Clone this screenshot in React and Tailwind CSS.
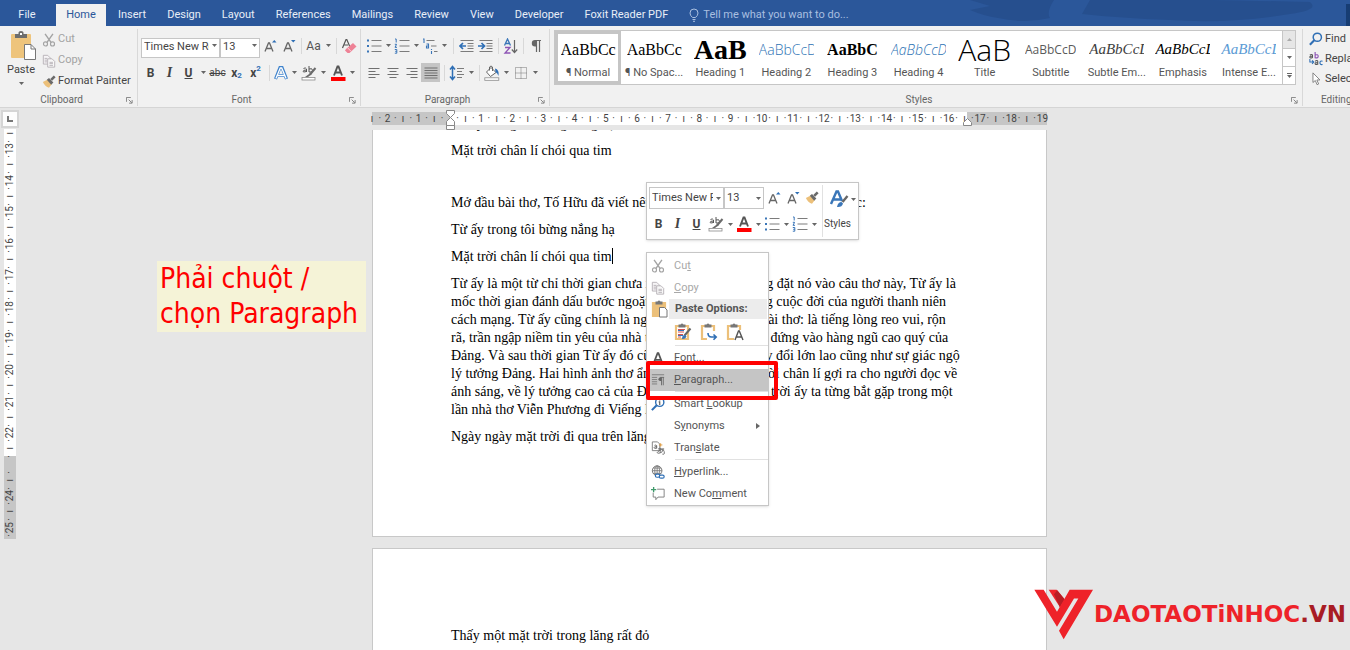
import React from "react";

const tabs = [
  "Insert",
  "Design",
  "Layout",
  "References",
  "Mailings",
  "Review",
  "View",
  "Developer",
  "Foxit Reader PDF",
];

const styleGallery = [
  { name: "¶ Normal", sample: "AaBbCc", look: "font-['Liberation_Serif',serif] text-base text-black", active: true },
  { name: "¶ No Spac...", sample: "AaBbCc", look: "font-['Liberation_Serif',serif] text-base text-black" },
  { name: "Heading 1", sample: "AaB", look: "font-['Liberation_Serif',serif] text-[28px] font-bold text-black" },
  { name: "Heading 2", sample: "AaBbCcD", look: "font-['Open_Sans',sans-serif] text-sm font-light text-[#2e74b5]" },
  { name: "Heading 3", sample: "AaBbC", look: "font-['Liberation_Serif',serif] text-base font-bold text-black" },
  { name: "Heading 4", sample: "AaBbCcD", look: "font-['Open_Sans',sans-serif] text-sm font-light italic text-[#2e74b5]" },
  { name: "Title", sample: "AaB", look: "font-['Open_Sans',sans-serif] text-[30px] font-light text-black" },
  { name: "Subtitle", sample: "AaBbCcD", look: "font-['Open_Sans',sans-serif] text-xs text-[#5a5a5a]" },
  { name: "Subtle Em...", sample: "AaBbCcD", look: "font-['Liberation_Serif',serif] text-[15px] italic text-[#404040]" },
  { name: "Emphasis", sample: "AaBbCcD", look: "font-['Liberation_Serif',serif] text-[15px] italic text-black" },
  { name: "Intense E...", sample: "AaBbCcD", look: "font-['Liberation_Serif',serif] text-[15px] italic text-[#5b9bd5]" },
];

const paragraphLines = [
  "Từ ấy là một từ chỉ thời gian chưa xác định cụ thể, nhưng đặt nó vào câu thơ này, Từ ấy là",
  "mốc thời gian đánh dấu bước ngoặt vô cùng lớn lao trong cuộc đời của người thanh niên",
  "cách mạng. Từ ấy cũng chính là nguồn cảm xúc của cả bài thơ: là tiếng lòng reo vui, rộn",
  "rã, trần ngập niềm tin yêu của nhà thơ trẻ khi mình được đứng vào hàng ngũ cao quý của",
  "Đảng. Và sau thời gian Từ ấy đó cũng chính là cả sự thay đổi lớn lao cũng như sự giác ngộ",
  "lý tưởng Đảng. Hai hình ảnh thơ ẩn dụ nắng hạ và mặt trời chân lí gợi ra cho người đọc về",
  "ánh sáng, về lý tưởng cao cả của Đảng cộng sản. Và mặt trời ấy ta từng bắt gặp trong một",
  "lần nhà thơ Viễn Phương đi Viếng lăng Bác:",
];

// Ruler marks come every quarter of a centimetre
const rulerMark = (quarter) => {
  if (quarter === 0) return "";
  if (quarter % 4 === 0) return String(Math.abs(quarter / 4));
  return quarter % 2 === 0 ? "ı" : "·";
};

const horizontalMarks = Array.from({ length: 87 }, (_, i) => rulerMark(i - 10));
const verticalMarks = Array.from({ length: 52 }, (_, i) =>
  i + 50 === 92 ? "" : rulerMark(i + 50),
);

/* ---------- Icons ---------- */

const Icon = ({ size = "w-4 h-4", box = "0 0 16 16", children }) => (
  <svg viewBox={box} className={`${size} shrink-0`} fill="none" aria-hidden="true">
    {children}
  </svg>
);

const Caret = () => (
  <svg viewBox="0 0 5 3" className="w-[5px] h-[3px] shrink-0" aria-hidden="true">
    <path d="M0 0h5L2.500 3z" fill="#666" />
  </svg>
);

const PasteIcon = () => (
  <Icon size="w-[26px] h-[29px]" box="0 0 26 29">
    <rect x="1" y="3" width="20" height="24" rx="1" fill="#eec47c" />
    <path d="M5 3h3.500V1.500a2.500 1.500 0 0 1 5 0V3H17v4H5z" fill="#6d6d6d" />
    <rect x="10" y="2" width="2" height="2" fill="#fff" />
    <path d="M14.500 13.500h6.500l4.500 4.500v10.500h-11z" fill="#fff" stroke="#777" />
    <path d="M21 13.500v4.500h4.500" stroke="#777" />
  </Icon>
);

const CutIcon = () => (
  <Icon size="w-[14px] h-[14px]">
    <path d="M3.500 1l7 10M12.500 1l-7 10" stroke="#a3a3a3" strokeWidth="1.600" />
    <circle cx="4" cy="12.500" r="2.300" stroke="#a3a3a3" strokeWidth="1.300" />
    <circle cx="12" cy="12.500" r="2.300" stroke="#a3a3a3" strokeWidth="1.300" />
  </Icon>
);

const CopyIcon = () => (
  <Icon size="w-[14px] h-[14px]">
    <path d="M1.500 1.500h5l3 3v7h-8z" fill="#f6f4f6" stroke="#b3aeb3" />
    <path d="M6.500 5.500h5l3 3v6.500h-8z" fill="#f8f8f8" stroke="#b3aeb3" />
    <path d="M3 5h3M3 7h3M3 9h3M8.500 9.500h4M8.500 11h4M8.500 13h4" stroke="#b3aeb3" />
  </Icon>
);

const BrushIcon = () => (
  <Icon size="w-[14px] h-[14px]">
    <path d="M1 8l5-2.500 5 5L8 14.500C5 14 2.500 11.500 1 8z" fill="#ecc07a" />
    <path d="M5.500 5.500L8 3.500l5 5-2.500 2.500z" fill="#6a6a6a" />
    <path d="M10.500 5.500l4-4" stroke="#6a6a6a" strokeWidth="3" />
  </Icon>
);

const GrowFontIcon = ({ down = false }) => (
  <Icon>
    <path d="M3 13.500L6.500 5h1l3.500 8.500M4.300 10.500h5.400" stroke="#666" strokeWidth="1.300" />
    <path d={down ? "M10 2h4.500l-2.200 2.500z" : "M10 4.500h4.500L12.300 2z"} fill="#2f6fb5" />
  </Icon>
);

const EraserIcon = () => (
  <Icon>
    <path d="M1.500 10L5 1.500h.8L9 9M3 7h4" stroke="#555" strokeWidth="1.200" />
    <path d="M5 11l7-6 3.500 3.500-7 6.500H6.500L4 12.500z" fill="#ee8296" />
    <path d="M6.500 9.700l3.500 3.600" stroke="#fbd5dc" />
  </Icon>
);

const TextEffectIcon = () => (
  <Icon>
    <path d="M2.500 14L7 2.500h2L13.500 14M4.500 10.500h7" stroke="#3f83cc" strokeWidth="3.200" />
    <path d="M2.900 13.600L7.300 3h1.400l4.400 10.600M4.500 10.500h7" stroke="#fff" strokeWidth="1.300" />
  </Icon>
);

const HighlightIcon = () => (
  <Icon>
    <path d="M2.500 3.500q2-1.500 3 .5v3M5.500 5q-3.500 0-3.500 1.300t3.500.2M8 1v6q3.500.8 3.500-1.700T8 4" stroke="#555" />
    <path d="M14.500 3L9 9.500" stroke="#6a6a6a" strokeWidth="2" />
    <path d="M9.500 8l1 1.500-3.500 2.500H4z" fill="#6a6a6a" />
    <rect x="1" y="12.500" width="13" height="2.500" fill="#fff" stroke="#8a8a8a" strokeWidth=".8" />
  </Icon>
);

const FontColorIcon = () => (
  <Icon>
    <path d="M4 10.500L7.500 1.500h1l3.500 9M5.200 7.500h5.600" stroke="#555" strokeWidth="1.900" />
    <rect x="1" y="12" width="14.500" height="4" fill="#ff0000" />
  </Icon>
);

const BulletsIcon = () => (
  <Icon>
    <path d="M1 2.500h2M1 8h2M1 13.500h2" stroke="#3a76b8" strokeWidth="2" />
    <path d="M5.500 2.500h10M5.500 8h10M5.500 13.500h10" stroke="#7c7c7c" strokeWidth="1.200" />
  </Icon>
);

const NumberingIcon = () => (
  <Icon>
    <path d="M1 1h1.200v3.500M.8 6.300h1.800L1 9.300h2M.8 11.500h2v3.700h-2M1.200 13.300h1.600" stroke="#3a76b8" />
    <path d="M5.500 2.500h10M5.500 8h10M5.500 13.500h10" stroke="#7c7c7c" strokeWidth="1.200" />
  </Icon>
);

const MultilevelIcon = () => (
  <Icon>
    <path d="M1 1h1v4M4.500 6h2v4h-2V8h2M9.500 11v1M9.500 13v3" stroke="#3a76b8" strokeWidth="1.100" />
    <path d="M4.500 2.500h8M9 8h5.500M12 13.500h3.500" stroke="#7c7c7c" strokeWidth="1.200" />
  </Icon>
);

const IndentIcon = ({ right = false }) => (
  <Icon>
    <path d="M1.500 2.500h13M8.500 5.500h6M8.500 8h6M8.500 10.500h6M1.500 13.500h13" stroke="#7c7c7c" strokeWidth="1.200" />
    <path
      d={right ? "M0 8h6M3.500 5l3 3-3 3" : "M1 8h6M4 5L1 8l3 3"}
      stroke="#2f6fb5"
      strokeWidth="1.700"
    />
  </Icon>
);

const SortIcon = () => (
  <Icon>
    <path d="M1.500 7.500L4.500 1l3 6.500M2.500 5.500h4" stroke="#3a76b8" strokeWidth="1.300" />
    <path d="M2 9.500h5l-5 5.500h5.500" stroke="#8e55b5" strokeWidth="1.300" />
    <path d="M11.500 2v12M8.800 11.500l2.700 3 2.700-3" stroke="#666" strokeWidth="1.200" />
  </Icon>
);

const PilcrowIcon = () => (
  <Icon>
    <path d="M13 2.500H7.500M8.500 2.500V14M11.500 2.500V14" stroke="#666" strokeWidth="1.200" />
    <path d="M8.500 2H7a3.200 3.200 0 0 0 0 6.400h1.500z" fill="#666" />
  </Icon>
);

const alignPaths = {
  left: "M2.500 3.500h11M2.500 6.500h7M2.500 9.500h11M2.500 12.500h7",
  center: "M2.500 3.500h11M4.500 6.500h7M2.500 9.500h11M4.500 12.500h7",
  right: "M2.500 3.500h11M6.500 6.500h7M2.500 9.500h11M6.500 12.500h7",
  justify: "M1.500 3h13M1.500 5.500h13M1.500 8h13M1.500 10.500h13M1.500 13h13",
};

const AlignIcon = ({ kind }) => (
  <Icon>
    <path d={alignPaths[kind]} stroke="#707070" strokeWidth="1.100" />
  </Icon>
);

const SpacingIcon = () => (
  <Icon>
    <path d="M3.500 2v12M1 4.500L3.500 1.500 6 4.500M1 11.500l2.500 3 2.500-3" stroke="#2f6fb5" strokeWidth="1.500" />
    <path d="M8 3.500h7M8 6.500h5M8 9.500h7M8 12.500h5" stroke="#7c7c7c" strokeWidth="1.200" />
  </Icon>
);

const ShadingIcon = () => (
  <Icon>
    <path d="M7 2.500l5 5-5.500 4-4-4.500z" fill="#fff" stroke="#666" />
    <path d="M5.500 5.500V2q1.500-2 3 0v4" stroke="#666" />
    <path d="M11 3.500q4.500 1 3.500 7.500-1-3-3-4z" fill="#2f6fb5" />
    <rect x=".8" y="12.800" width="14" height="2.500" fill="#fff" stroke="#8a8a8a" strokeWidth=".8" />
  </Icon>
);

const BordersIcon = () => (
  <Icon>
    <path d="M2.500 2.500h11v11h-11zM8 2.500v11M2.500 8h11" stroke="#777" strokeDasharray="1 1" />
  </Icon>
);

const LauncherIcon = () => (
  <svg viewBox="0 0 8 8" className="w-[7px] h-[7px]" fill="none" aria-hidden="true">
    <path d="M.5 5.500v-5h5M3 3l3.500 3.500M7 3.500V7H3.500" stroke="#777" />
  </svg>
);

const FindIcon = () => (
  <Icon size="w-[14px] h-[14px]">
    <circle cx="9.500" cy="6" r="4.700" stroke="#2f6fb5" strokeWidth="1.700" />
    <path d="M6 9.500L1 14.500" stroke="#2f6fb5" strokeWidth="2.400" />
  </Icon>
);

const ReplaceIcon = () => (
  <Icon size="w-[14px] h-[14px]">
    <path d="M1 3.500q2.500-1.500 3 0v3M4 4.500q-3.500 0-3 1.500t3 .3" stroke="#555" strokeWidth="1.200" />
    <path d="M7 0v6.500q3.500.8 3.500-1.700T7 3.500" stroke="#8e55b5" strokeWidth="1.300" />
    <path d="M1 8v3.500h4M3.500 9.500l2 2-2 2" stroke="#2f6fb5" strokeWidth="1.200" />
    <path d="M7 10.500q2.500-1.500 3 0v4M10 12q-3.500 0-3 1.500t3 .3" stroke="#555" strokeWidth="1.200" />
    <path d="M15.500 10.500q-3-.8-3 1.800t3 2" stroke="#2f6fb5" strokeWidth="1.300" />
  </Icon>
);

const SelectIcon = () => (
  <Icon size="w-[14px] h-[14px]">
    <path d="M4.500 1v11l2.700-2.300 2 4.800 1.800-.8-2-4.600h3.500z" fill="#fff" stroke="#777" />
  </Icon>
);

const PasteOptionIcon = ({ kind = "plain" }) => (
  <Icon size="w-[18px] h-[18px]" box="0 0 18 18">
    <path
      d="M2 3h12v13H2z"
      stroke="#ecc07a"
      strokeWidth="2.200"
      fill={kind === "copy" ? "#ecc07a" : "#fff"}
    />
    <path d="M4.500 1.500h2q1.500-2 3 0h2v3h-7z" fill="#777" />
    {kind === "copy" && <path d="M8.500 7.500h5l2.500 2.500v7H8.500z" fill="#fff" stroke="#777" />}
    {kind === "source" && (
      <>
        <path d="M4 6.500h7M4 9h6M4 11.500h5M4 14h3" stroke="#d9534f" />
        <path d="M4 7.500h6M4 12.500h5" stroke="#3a76b8" />
        <path d="M16.500 5.500l-6 7" stroke="#666" strokeWidth="2" />
        <path d="M8 16q0-4 3-4l1.500 1.500q-1 3-4.500 2.500z" fill="#3a76b8" />
      </>
    )}
    {kind === "merge" && (
      <>
        <path d="M7 8h10v9H7z" fill="#fff" />
        <path d="M8 10q0 4 3.500 4H16M13.500 11.500l2.700 2.500-2.700 2.700" stroke="#2f6fb5" strokeWidth="1.600" />
      </>
    )}
    {kind === "text" && (
      <>
        <path d="M8 7h9v10H8z" fill="#fff" />
        <path d="M9 17l3.500-9h.8l3.700 9M10.500 14h5" stroke="#555" strokeWidth="1.400" />
      </>
    )}
  </Icon>
);

const FontIcon = () => (
  <Icon size="w-[14px] h-[14px]">
    <path d="M3 14L7.500 2.500h1L13 14M4.500 10h7" stroke="#555" strokeWidth="2" />
  </Icon>
);

const ParagraphIcon = () => (
  <Icon size="w-[14px] h-[14px]">
    <path d="M1 2h14M1 5h6M1 7.500h6M1 10h6M1 12.500h6" stroke="#777" />
    <path d="M15 5H10M12 5v9M14 5v9" stroke="#666" />
    <path d="M12 5h-1.500a2 2 0 0 0 0 4H12z" fill="#666" />
  </Icon>
);

const LookupIcon = () => (
  <Icon size="w-[14px] h-[14px]">
    <circle cx="10" cy="6" r="4.700" fill="#fff" stroke="#2f6fb5" strokeWidth="1.600" />
    <path d="M6.500 9.500L1 15" stroke="#2f6fb5" strokeWidth="2.400" />
    <path d="M10 3v1M8.800 5.500H10V9" stroke="#555" strokeWidth="1.300" />
  </Icon>
);

const TranslateIcon = () => (
  <Icon size="w-[14px] h-[14px]">
    <path d="M1.500 1h6l2.500 2.500V11H1.500z" fill="#fff" stroke="#777" />
    <path d="M4 5q2-1 2.500.3V8.500M6.500 6.500Q3.500 6.300 3.500 7.700T6.500 8" stroke="#555" />
    <path d="M9 4.500h4M11 2.500v4" stroke="#e09a3b" />
    <path d="M8 9h7M10.500 7.500v6M14 9.500q-1 4.500-5 4.500T9.500 11t5.500 1-2 3" stroke="#666" />
  </Icon>
);

const HyperlinkIcon = () => (
  <Icon size="w-[14px] h-[14px]">
    <circle cx="7" cy="6.500" r="5.500" fill="#fff" stroke="#666" />
    <path d="M1.500 6.500h11M7 1v11M2.500 3.500h9M2.500 9.500h9" stroke="#777" />
    <ellipse cx="7" cy="6.500" rx="2.700" ry="5.500" stroke="#777" />
    <rect x="5" y="10.500" width="5" height="3.500" rx="1.700" fill="#fff" stroke="#2f6fb5" strokeWidth="1.400" />
    <rect x="9.500" y="11.500" width="5.500" height="3.500" rx="1.700" fill="#fff" stroke="#2f6fb5" strokeWidth="1.400" />
  </Icon>
);

const CommentIcon = () => (
  <Icon size="w-[14px] h-[14px]">
    <path d="M7 2.500h8v9H8l-2.500 3v-3h-3v-5" stroke="#777" />
    <path d="M3 0v6M0 3h6" stroke="#3f9a6b" strokeWidth="1.500" />
  </Icon>
);

/* ---------- Small controls ---------- */

const ToolButton = ({ label, width = "w-[19px]", active = false, children }) => (
  <button
    type="button"
    aria-label={label}
    aria-pressed={active}
    className={`${width} h-[19px] flex items-center justify-center shrink-0 text-[#444] ${
      active ? "bg-[#c5c5c5]" : "hover:bg-[#d5d5d5]"
    }`}
  >
    {children}
  </button>
);

const CaretButton = ({ label }) => (
  <ToolButton label={`${label} options`} width="w-[10px]">
    <Caret />
  </ToolButton>
);

const Separator = ({ wide = false }) => (
  <span className={`${wide ? "w-2" : "w-1.5"} flex justify-center shrink-0`}>
    <span className="w-px h-4 bg-[#d8d8d8]" />
  </span>
);

const Combo = ({ label, value, width, height = "h-[20px]" }) => (
  <label className={`relative block shrink-0 ${width}`}>
    <span className="sr-only">{label}</span>
    <select
      defaultValue={value}
      className={`appearance-none w-full ${height} bg-white border border-[#c6c6c6] pl-0.5 pr-2.5 text-[11px] text-[#444] outline-none`}
    >
      <option>{value}</option>
    </select>
    <span className="absolute right-[3px] inset-y-0 flex items-center pointer-events-none">
      <Caret />
    </span>
  </label>
);

const RibbonGroup = ({ title, className = "", launcher = true, children }) => (
  <section className={`flex flex-col mt-[3px] mb-px border-r border-[#d8d8d8] ${className}`}>
    <div className="flex-1">{children}</div>
    <div className="relative h-3 pr-[18px] text-center text-[10px] leading-3 text-[#666]">
      {title}
      {launcher && (
        <button type="button" aria-label={`${title} settings`} className="absolute right-1 top-[3px]">
          <LauncherIcon />
        </button>
      )}
    </div>
  </section>
);

/* ---------- Ribbon ---------- */

const TitleTabs = () => (
  <nav className="relative flex items-end h-[26px] bg-[#2b579a] text-[11px] text-[#e8eef7] overflow-hidden">
    <svg viewBox="0 0 400 26" className="absolute right-0 top-0 w-[400px] h-[26px]" aria-hidden="true">
      <path d="M20 0h84q-8 12-4 18-26 6-52 0-14-2-28-8l20-4z" fill="#264f8e" />
      <path d="M140 0h120q12 0 100 2 10 8-20 12-60 10-120 6-50-2-88-6z" fill="#264f8e" />
      <rect x="396" y="4" width="4" height="22" fill="#173d73" />
    </svg>
    <button type="button" className="w-[56px] h-[22px] pr-0.5">
      File
    </button>
    <button type="button" className="w-[50px] h-[22px] mr-px bg-[#f1f1f1] text-[#2b579a]">
      Home
    </button>
    {tabs.map((tab) => (
      <button key={tab} type="button" className="h-[22px] pl-[11px] pr-[10px] whitespace-nowrap">
        {tab}
      </button>
    ))}
    <label className="flex items-center h-[22px] ml-[11px] gap-1">
      <svg viewBox="0 0 10 14" className="w-[10px] h-[14px]" fill="none" aria-hidden="true">
        <path d="M3.500 9.500Q1 7.500 1 5a4 4 0 0 1 8 0q0 2.500-2.500 4.500zM3.500 11.500h3M4 13.300h2" stroke="#a9bfe0" />
      </svg>
      <input
        type="text"
        aria-label="Tell me"
        placeholder="Tell me what you want to do..."
        className="w-[170px] bg-transparent outline-none placeholder:text-[#a9bfe0]"
      />
    </label>
  </nav>
);

const ClipboardGroup = () => (
  <RibbonGroup title="Clipboard" className="w-[138px] pl-1">
    <div className="flex">
      <button type="button" className="w-[38px] flex flex-col items-center pt-0.5 text-[11px] leading-4 text-[#444]">
        <PasteIcon />
        <span className="-ml-1 mt-0.5">Paste</span>
        <span className="-ml-1 h-2.5 flex items-center">
          <Caret />
        </span>
      </button>
      <div className="flex flex-col text-[11px] whitespace-nowrap">
        <button type="button" className="flex items-center gap-0.5 h-[21px] text-[#a3a3a3]">
          <CutIcon />
          Cut
        </button>
        <button type="button" className="flex items-center gap-0.5 h-[21px] text-[#a3a3a3]">
          <CopyIcon />
          Copy
        </button>
        <button type="button" className="flex items-center gap-0.5 h-[21px] text-[#444]">
          <BrushIcon />
          Format Painter
        </button>
      </div>
    </div>
  </RibbonGroup>
);

const FontGroup = () => (
  <RibbonGroup title="Font" className="w-[223px] pl-[3px]">
    <div className="flex items-center h-[33px]">
      <Combo label="Font" value="Times New Roman" width="w-[79px]" />
      <Combo label="Font size" value="13" width="w-[40px]" />
      <ToolButton label="Grow font">
        <GrowFontIcon />
      </ToolButton>
      <ToolButton label="Shrink font">
        <GrowFontIcon down />
      </ToolButton>
      <Separator />
      <ToolButton label="Change case">
        <span className="text-xs text-[#555]">Aa</span>
      </ToolButton>
      <CaretButton label="Change case" />
      <Separator />
      <ToolButton label="Clear formatting">
        <EraserIcon />
      </ToolButton>
    </div>
    <div className="flex items-center h-[21px]">
      <ToolButton label="Bold">
        <span className="text-xs font-bold">B</span>
      </ToolButton>
      <ToolButton label="Italic">
        <span className="font-['Liberation_Serif',serif] text-sm font-bold italic">I</span>
      </ToolButton>
      <ToolButton label="Underline">
        <span className="text-xs font-bold underline">U</span>
      </ToolButton>
      <CaretButton label="Underline" />
      <ToolButton label="Strikethrough">
        <span className="text-[10px] line-through">abc</span>
      </ToolButton>
      <ToolButton label="Subscript">
        <span className="text-xs font-bold">x</span>
        <span className="self-end text-[8px] font-bold text-[#2f6fb5]">2</span>
      </ToolButton>
      <ToolButton label="Superscript">
        <span className="text-xs font-bold">x</span>
        <span className="self-start text-[8px] font-bold text-[#2f6fb5]">2</span>
      </ToolButton>
      <Separator wide />
      <ToolButton label="Text effects" width="w-[16px]">
        <TextEffectIcon />
      </ToolButton>
      <CaretButton label="Text effects" />
      <ToolButton label="Highlight">
        <HighlightIcon />
      </ToolButton>
      <CaretButton label="Highlight" />
      <ToolButton label="Font color">
        <FontColorIcon />
      </ToolButton>
      <CaretButton label="Font color" />
    </div>
  </RibbonGroup>
);

const ParagraphGroup = () => (
  <RibbonGroup title="Paragraph" className="w-[189px] pl-[3px]">
    <div className="flex items-center h-[33px]">
      <ToolButton label="Bullets">
        <BulletsIcon />
      </ToolButton>
      <CaretButton label="Bullets" />
      <ToolButton label="Numbering" width="w-[18px]">
        <NumberingIcon />
      </ToolButton>
      <CaretButton label="Numbering" />
      <ToolButton label="Multilevel list" width="w-[18px]">
        <MultilevelIcon />
      </ToolButton>
      <CaretButton label="Multilevel list" />
      <Separator wide />
      <ToolButton label="Decrease indent">
        <IndentIcon />
      </ToolButton>
      <ToolButton label="Increase indent">
        <IndentIcon right />
      </ToolButton>
      <Separator />
      <ToolButton label="Sort">
        <SortIcon />
      </ToolButton>
      <Separator />
      <ToolButton label="Show paragraph marks">
        <PilcrowIcon />
      </ToolButton>
    </div>
    <div className="flex items-center h-[21px]">
      <ToolButton label="Align left">
        <AlignIcon kind="left" />
      </ToolButton>
      <ToolButton label="Center">
        <AlignIcon kind="center" />
      </ToolButton>
      <ToolButton label="Align right">
        <AlignIcon kind="right" />
      </ToolButton>
      <ToolButton label="Justify" active>
        <AlignIcon kind="justify" />
      </ToolButton>
      <Separator wide />
      <ToolButton label="Line spacing" width="w-[18px]">
        <SpacingIcon />
      </ToolButton>
      <CaretButton label="Line spacing" />
      <Separator />
      <ToolButton label="Shading">
        <ShadingIcon />
      </ToolButton>
      <CaretButton label="Shading" />
      <ToolButton label="Borders">
        <BordersIcon />
      </ToolButton>
      <CaretButton label="Borders" />
    </div>
  </RibbonGroup>
);

const StylesGroup = () => (
  <RibbonGroup title="Styles" className="flex-1 min-w-0 pl-1">
    <div className="flex h-[55px] mt-px mr-1.5 bg-white border border-[#c6c6c6]">
      <div className="flex flex-1 min-w-0">
        {styleGallery.map(({ name, sample, look, active }) => (
          <button
            key={name}
            type="button"
            className={`flex-1 min-w-0 flex flex-col items-center border-[3px] ${
              active ? "border-[#c5c5c5]" : "border-transparent"
            }`}
          >
            <span className={`flex items-center h-[31px] max-w-[55px] overflow-hidden leading-[31px] ${look}`}>
              {sample}
            </span>
            <span className="text-[11px] leading-4 text-[#555] whitespace-nowrap">{name}</span>
          </button>
        ))}
      </div>
      <div className="w-[13px] flex flex-col border-l border-[#c6c6c6] divide-y divide-[#c6c6c6]">
        <button type="button" aria-label="Previous styles" className="flex-1 flex items-center justify-center bg-[#e6e6e6]">
          <svg viewBox="0 0 5 3" className="w-[5px] h-[3px]" aria-hidden="true">
            <path d="M0 3h5L2.500 0z" fill="#aaa" />
          </svg>
        </button>
        <button type="button" aria-label="Next styles" className="flex-1 flex items-center justify-center">
          <Caret />
        </button>
        <button type="button" aria-label="More styles" className="flex-1 flex flex-col gap-px items-center justify-center">
          <span className="w-[5px] h-px bg-[#666]" />
          <Caret />
        </button>
      </div>
    </div>
  </RibbonGroup>
);

const EditingGroup = () => (
  <section className="w-[47px] shrink-0 mt-[3px] mb-px pl-1.5 flex flex-col overflow-hidden text-[11px] text-[#444]">
    <div className="flex-1">
      <button type="button" className="flex items-center gap-0.5 h-5 whitespace-nowrap">
        <FindIcon />
        Find
      </button>
      <button type="button" className="flex items-center gap-0.5 h-5 whitespace-nowrap">
        <ReplaceIcon />
        Replace
      </button>
      <button type="button" className="flex items-center gap-0.5 h-5 whitespace-nowrap">
        <SelectIcon />
        Select
      </button>
    </div>
    <div className="h-3 pl-3 text-[10px] leading-3 text-[#666]">Editing</div>
  </section>
);

const Ribbon = () => (
  <div className="flex h-[82px] bg-[#f1f1f1] border-b border-[#d5d5d5]">
    <ClipboardGroup />
    <FontGroup />
    <ParagraphGroup />
    <StylesGroup />
    <EditingGroup />
  </div>
);

/* ---------- Floating menus ---------- */

const MiniToolbar = () => (
  <div className="absolute left-[274px] top-[52px] w-[213px] h-[58px] flex bg-white border border-[#c6c6c6] shadow-sm text-[#444]">
    <div className="flex-1 pl-0.5">
      <div className="flex items-center h-[30px]">
        <Combo label="Mini toolbar font" value="Times New Roman" width="w-[75px]" height="h-[22px]" />
        <Combo label="Mini toolbar font size" value="13" width="w-[40px]" height="h-[22px]" />
        <ToolButton label="Grow font">
          <GrowFontIcon />
        </ToolButton>
        <ToolButton label="Shrink font">
          <GrowFontIcon down />
        </ToolButton>
        <ToolButton label="Format painter">
          <BrushIcon />
        </ToolButton>
      </div>
      <div className="flex items-center h-[22px]">
        <ToolButton label="Bold">
          <span className="text-xs font-bold">B</span>
        </ToolButton>
        <ToolButton label="Italic">
          <span className="font-['Liberation_Serif',serif] text-sm font-bold italic">I</span>
        </ToolButton>
        <ToolButton label="Underline">
          <span className="text-xs font-bold underline">U</span>
        </ToolButton>
        <ToolButton label="Highlight">
          <HighlightIcon />
        </ToolButton>
        <CaretButton label="Highlight" />
        <ToolButton label="Font color" width="w-[18px]">
          <FontColorIcon />
        </ToolButton>
        <CaretButton label="Font color" />
        <ToolButton label="Bullets" width="w-[18px]">
          <BulletsIcon />
        </ToolButton>
        <CaretButton label="Bullets" />
        <ToolButton label="Numbering" width="w-[18px]">
          <NumberingIcon />
        </ToolButton>
        <CaretButton label="Numbering" />
      </div>
    </div>
    <button type="button" className="w-[36px] my-0.5 flex flex-col items-center border-l border-[#e1e1e1]">
      <span className="flex items-center gap-0.5 h-7 pl-1">
        <Icon size="w-[20px] h-[20px]" box="0 0 20 20">
          <path d="M2 15L7.500 2.500h1.500L13 12M4 10.500h8" stroke="#3a76b8" strokeWidth="2.400" />
          <path d="M18.500 7l-5 6" stroke="#666" strokeWidth="2.400" />
          <path d="M8 18q1-5 4.500-5l1.500 1.500Q13 18.500 8 18z" fill="#3a76b8" />
        </Icon>
        <Caret />
      </span>
      <span className="h-[22px] flex items-center pr-1.5 text-[10px]">Styles</span>
    </button>
  </div>
);

const MenuItem = ({ icon, disabled = false, active = false, submenu = false, children }) => (
  <button
    type="button"
    role="menuitem"
    disabled={disabled}
    className={`w-full h-[22px] flex items-center text-left text-[11px] whitespace-nowrap ${
      disabled ? "text-[#a8a8a8]" : "text-[#555]"
    } ${active ? "bg-[#c5c5c5]" : ""}`}
  >
    <span className="w-[27px] pl-1 shrink-0">{icon}</span>
    <span className="flex-1">{children}</span>
    {submenu && (
      <svg viewBox="0 0 4 6" className="w-1 h-1.5 mr-2" aria-hidden="true">
        <path d="M0 0v6l4-3z" fill="#666" />
      </svg>
    )}
  </button>
);

const MenuLine = () => <div className="ml-[28px] mb-px h-px bg-[#e1e1e1]" />;

const ContextMenu = () => (
  <div
    role="menu"
    className="absolute left-[274px] top-[122px] w-[123px] pt-0.5 bg-white border border-[#c6c6c6] shadow-sm"
  >
    <MenuItem icon={<CutIcon />} disabled>
      Cu<u>t</u>
    </MenuItem>
    <MenuItem icon={<CopyIcon />} disabled>
      <u>C</u>opy
    </MenuItem>
    <div className="flex items-center h-5 pl-1 text-[11px] font-bold text-[#555]">
      <span className="w-[18px] shrink-0">
        <PasteOptionIcon kind="copy" />
      </span>
      <span className="flex-1 h-5 flex items-center pl-1.5 mr-px bg-[#ececec]">Paste Options:</span>
    </div>
    <div className="flex items-center gap-2 h-[26px] pl-[27px]">
      <button type="button" aria-label="Keep source formatting">
        <PasteOptionIcon kind="source" />
      </button>
      <button type="button" aria-label="Merge formatting">
        <PasteOptionIcon kind="merge" />
      </button>
      <button type="button" aria-label="Keep text only">
        <PasteOptionIcon kind="text" />
      </button>
    </div>
    <MenuLine />
    <MenuItem icon={<FontIcon />}>
      <u>F</u>ont...
    </MenuItem>
    <MenuItem icon={<ParagraphIcon />} active>
      <u>P</u>aragraph...
    </MenuItem>
    <MenuLine />
    <MenuItem icon={<LookupIcon />}>
      Smart <u>L</u>ookup
    </MenuItem>
    <MenuItem submenu>
      S<u>y</u>nonyms
    </MenuItem>
    <MenuItem icon={<TranslateIcon />}>
      Tran<u>s</u>late
    </MenuItem>
    <MenuLine />
    <MenuItem icon={<HyperlinkIcon />}>
      <u>H</u>yperlink...
    </MenuItem>
    <MenuItem icon={<CommentIcon />}>
      New Co<u>m</u>ment
    </MenuItem>
    {/* Highlight frame around the Paragraph entry */}
    <div className="absolute -left-px top-[108px] w-[132px] h-[39px] border-4 border-[#ff0000] rounded-[2px] pointer-events-none" />
  </div>
);

/* ---------- Document ---------- */

const VerticalRuler = () => (
  <div className="w-5 shrink-0 pt-0.5 flex flex-col items-center">
    <button
      type="button"
      aria-label="Tab selector"
      className="w-[18px] h-[18px] shrink-0 flex items-center justify-center bg-[#fdfdfd] border-2 border-[#d5d5d5]"
    >
      <span className="w-1.5 h-1.5 border-l-2 border-b-2 border-[#777]" />
    </button>
    <div className="w-3 h-[410px] mt-px flex flex-col bg-[linear-gradient(#fff_0_327px,#c6c6c6_327px)] text-[10px] leading-3 text-[#444]">
      {verticalMarks.map((mark, i) => (
        <span key={i} className="flex-1 basis-0 min-h-0 flex items-center justify-center">
          <span className="[writing-mode:vertical-rl] rotate-180">{mark}</span>
        </span>
      ))}
    </div>
  </div>
);

const HorizontalRuler = () => (
  <div className="relative h-[13px] bg-[linear-gradient(90deg,#c6c6c6_0_78px,#fff_78px_595px,#c6c6c6_595px)]">
    <div className="flex -ml-1 text-[10px] leading-[13px] text-[#444]">
      {horizontalMarks.map((mark, i) => (
        <span key={i} className="flex-1 basis-0 min-w-0 flex justify-center">
          {mark}
        </span>
      ))}
    </div>
    <svg viewBox="0 0 9 20" className="absolute left-[74px] -top-0.5 w-[9px] h-5" aria-hidden="true">
      <path d="M.5.500h8v3l-4 4-4-4zM.5 15.500v-4l4-4 4 4v4zM.5 15.500h8v4h-8z" fill="#fff" stroke="#888" />
    </svg>
    <svg viewBox="0 0 9 8" className="absolute left-[591px] top-1.5 w-[9px] h-2" aria-hidden="true">
      <path d="M.5 7.500v-3l4-4 4 4v3z" fill="#fff" stroke="#888" />
    </svg>
  </div>
);

const Document = () => (
  <div className="flex flex-1 min-h-0">
    <VerticalRuler />
    <main className="flex-1 min-w-0 flex flex-col items-center pl-[49px]">
      <div className="w-[675px] h-[22px] shrink-0 pt-1">
        <HorizontalRuler />
      </div>
      <div className="w-full flex-1 min-h-0 flex justify-center overflow-hidden">
        <div className="relative w-[675px] shrink-0 font-['Liberation_Serif',serif] text-sm leading-[18px] text-black">
          <article className="px-[78px] pb-[90px] bg-white border border-t-0 border-[#c8c8c8]">
            <div className="-mt-[15px] flex flex-col gap-[9px] whitespace-nowrap">
              <p>Từ ấy trong tôi bừng nắng hạ</p>
              <p>Mặt trời chân lí chói qua tim</p>
              <p className="h-4" />
              <p>Mở đầu bài thơ, Tố Hữu đã viết nên những câu thơ rất say mê và náo nức:</p>
              <p>Từ ấy trong tôi bừng nắng hạ</p>
              <p>
                Mặt trời chân lí chói qua tim
                <span className="inline-block w-px h-4 bg-black align-text-bottom" />
              </p>
              <p>
                {paragraphLines.map((line) => (
                  <span key={line} className="block">
                    {line}
                  </span>
                ))}
              </p>
              <p>Ngày ngày mặt trời đi qua trên lăng</p>
            </div>
          </article>
          <article className="mt-[11px] h-[300px] p-[78px] bg-white border border-[#c8c8c8]">
            <p>Thấy một mặt trời trong lăng rất đỏ</p>
          </article>

          <aside className="absolute right-full top-[131px] mr-1.5 w-[209px] h-[71px] pl-[3px] bg-[#f5f3d7] font-['DejaVu_Sans_Condensed','DejaVu_Sans',sans-serif] text-[28px] leading-[35px] text-[#ff0000] whitespace-nowrap">
            Phải chuột /
            <br />
            chọn Paragraph
          </aside>

          <div className="font-[Roboto,sans-serif]">
            <MiniToolbar />
            <ContextMenu />
          </div>
        </div>
      </div>
    </main>
  </div>
);

const BrandMark = () => (
  <a
    href="#daotaotinhoc"
    className="absolute right-1 bottom-2.5 flex items-center font-['DejaVu_Sans',sans-serif] text-[23px] font-bold text-[#ee2229]"
  >
    <svg viewBox="38 57 180 152" className="w-[60px] h-[51px]" aria-hidden="true">
      <path d="M82 59h24l24 28-14 24z" fill="#ee2229" />
      <path d="M98 72l10-12 22 28-14 24z" fill="#b81d24" />
      <path d="M39 59h28l40 66 38-66h70l-88 148-14-25 58-97h-13l-51 85z" fill="#ee2229" />
    </svg>
    <span>
      DAOTAOTiNHOC<span className="text-[#a81c24]">.VN</span>
    </span>
  </a>
);

export default function App() {
  return (
    <div className="relative h-screen flex flex-col overflow-hidden bg-[#e6e6e6] font-[Roboto,sans-serif]">
      <TitleTabs />
      <Ribbon />
      <Document />
      <BrandMark />
    </div>
  );
}
